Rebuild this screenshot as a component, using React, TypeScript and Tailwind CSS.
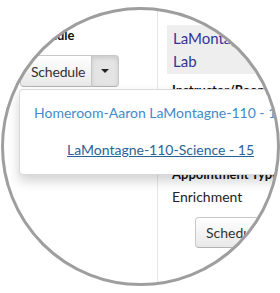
import React from "react";

/* ===================== LENS VIEW ===================== */
export default function App() {
  return (
    <div className="relative w-[280px] h-[293px] bg-white overflow-hidden font-['Lato',sans-serif] text-[#333]">
      {/* CLIPPED CONTENT */}
      <div className="relative flex w-full h-full bg-white [clip-path:circle(137px_at_140px_146.5px)]">
        {/* LEFT COLUMN */}
        <div className="w-[158px] shrink-0 border-r border-[#e6e6e6] pl-[22px] pt-[27px]">
          <div className="text-[13px] leading-[16px] font-bold text-[#111]">Schedule</div>
          <div className="-ml-[2px] mt-[12px] flex h-[32px]">
            <button className="h-full w-[72px] pl-[10px] text-left text-[14px] tracking-[-0.2px] text-[#333] rounded-l-[4px] border border-[#c8c8c8] border-b-[#b3b3b3] bg-gradient-to-b from-white to-[#e8e8e8]">
              Schedule
            </button>
            <button className="h-full w-[27px] flex items-center justify-center rounded-r-[4px] border border-l-0 border-[#c8c8c8] border-b-[#b3b3b3] bg-[#e4e4e4] shadow-[inset_0_2px_4px_rgba(0,0,0,0.12)]">
              <span className="block w-0 h-0 border-l-[4px] border-r-[4px] border-t-[4px] border-l-transparent border-r-transparent border-t-[#222]" />
            </button>
          </div>
        </div>

        {/* RIGHT COLUMN */}
        <div className="flex-1 pl-[9px] pt-[25px] whitespace-nowrap">
          <div className="bg-[#eeeeee] px-[6px] pt-[2px] pb-[1px] text-[15px] leading-[23px] text-[#333399]">
            <div>LaMontagne-110-Science</div>
            <div>Lab</div>
          </div>
          <div className="pl-[5px] mt-[8px] text-[13px] leading-[16px] font-bold text-[#111]">Instructor/Room</div>
          <div className="pl-[5px] mt-[4px] text-[14px] leading-[20px]">Aaron LaMontagne</div>
          <div className="pl-[5px] text-[14px] leading-[20px]">110</div>
          <div className="pl-[5px] mt-[24px] text-[13px] leading-[16px] font-bold text-[#111]">Appointment Type</div>
          <div className="pl-[5px] mt-[5px] text-[14px] leading-[20px] text-[#222]">Enrichment</div>
          <button className="ml-[28px] mt-[10px] h-[31px] px-[10px] text-[14px] text-[#333] rounded-[4px] border border-[#c8c8c8] border-b-[#b3b3b3] bg-gradient-to-b from-white to-[#e8e8e8]">
            Schedule
          </button>
        </div>

        {/* DROPDOWN MENU */}
        <div className="absolute left-[19px] top-[89px] w-[330px] h-[86px] bg-white rounded-[4px] border border-[rgba(0,0,0,0.15)] shadow-[0_6px_12px_rgba(0,0,0,0.18)] pt-[13px] text-[14px] leading-[20px] whitespace-nowrap">
          <div className="pl-[14px] text-[#428bca]">Homeroom-Aaron LaMontagne-110 - 15</div>
          <div className="pl-[47px] mt-[17px] text-[#2a6496] underline">LaMontagne-110-Science - 15</div>
        </div>
      </div>

      {/* LENS RING */}
      <div className="absolute left-[0.5px] top-[7px] w-[279px] h-[279px] rounded-full border-[3px] border-[#9e9e9e] pointer-events-none" />
    </div>
  );
}
